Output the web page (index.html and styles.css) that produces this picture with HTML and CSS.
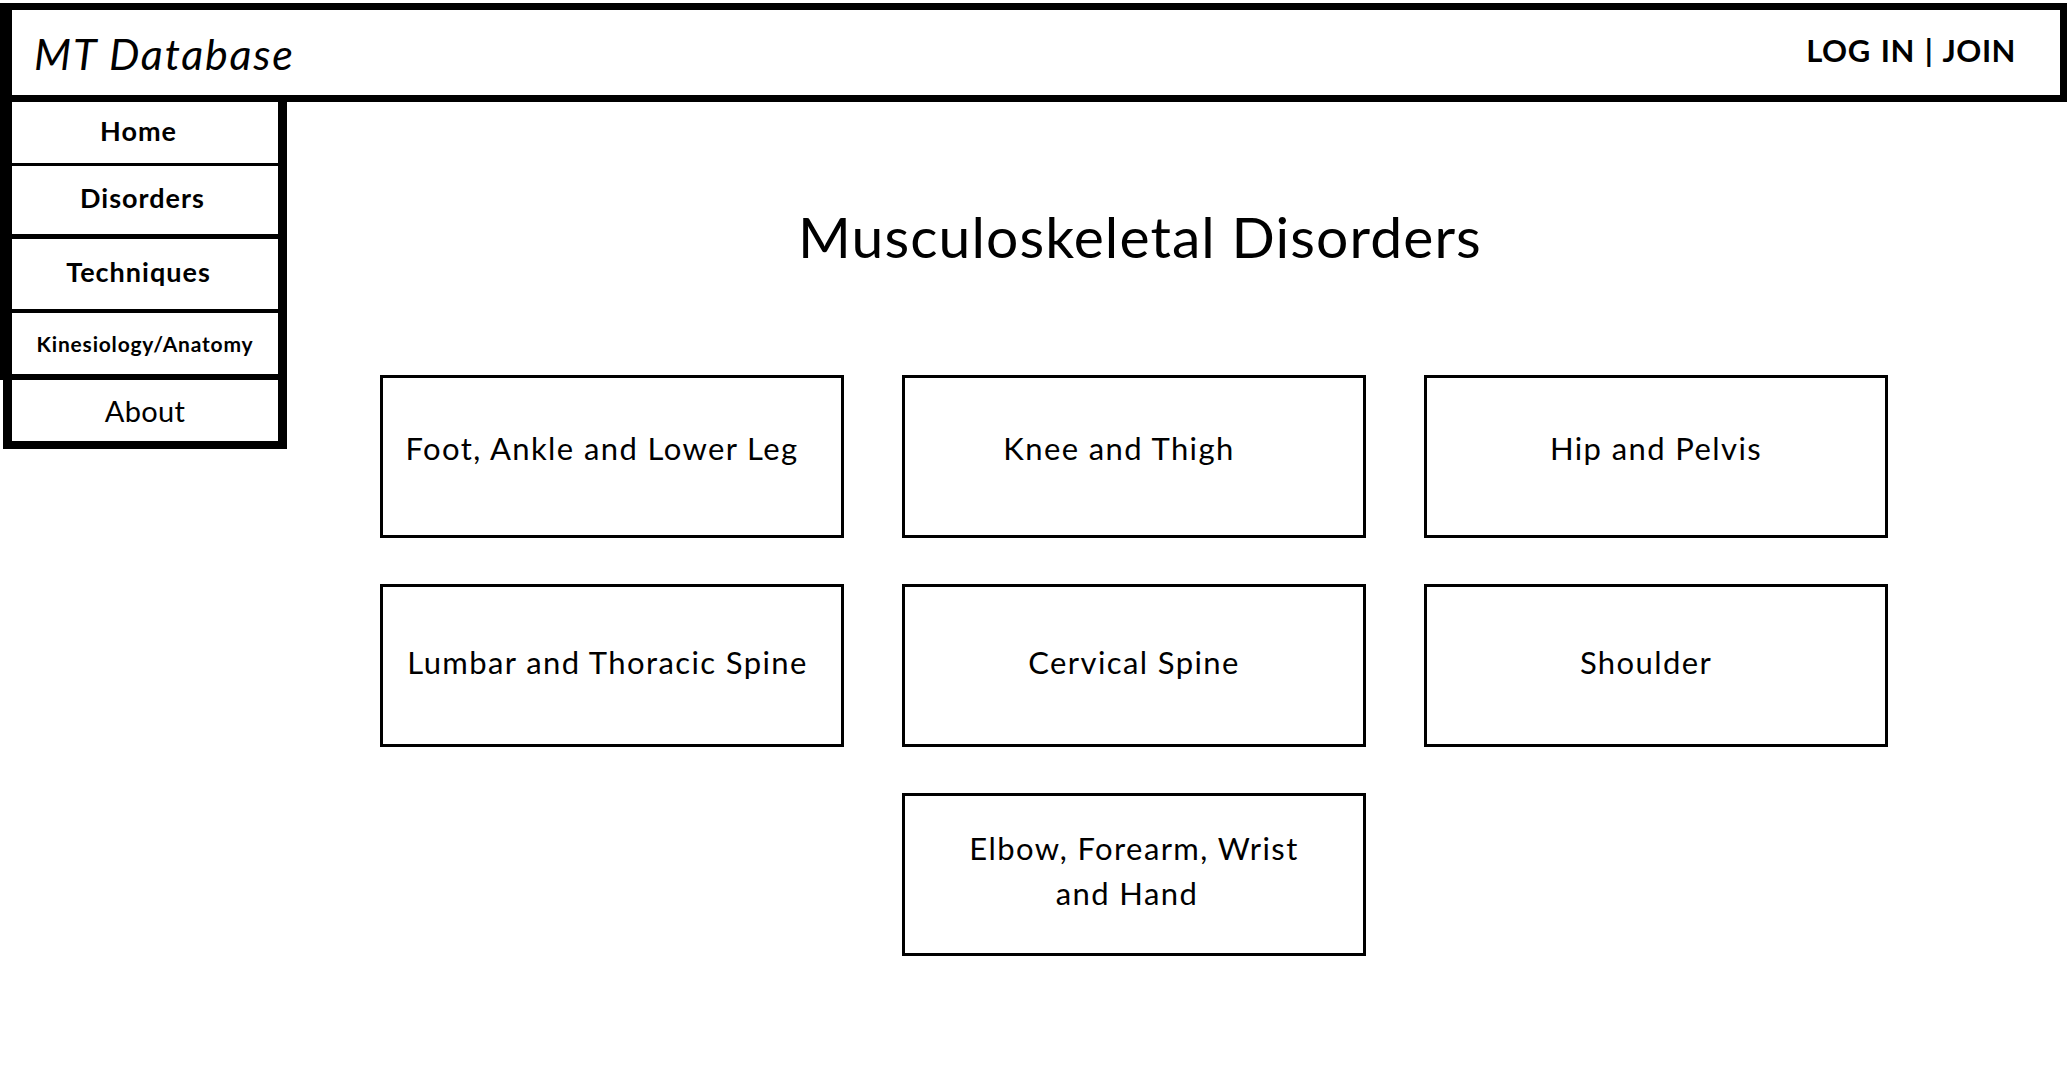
FILE: index.html
```html
<!DOCTYPE html>
<html lang="en">
<head>
<meta charset="utf-8">
<title>MT Database</title>
<link rel="stylesheet" href="styles.css">
</head>
<body>
  <header class="site-header">
    <div class="brand">MT Database</div>
    <div class="auth">LOG IN | JOIN</div>
  </header>
  <div class="layout">
    <nav class="sidenav">
      <div class="nav-group">
        <a class="nav-item nav-home" href="#">Home</a>
        <a class="nav-item nav-disorders" href="#">Disorders</a>
        <a class="nav-item nav-techniques" href="#">Techniques</a>
        <a class="nav-item nav-kines" href="#">Kinesiology/Anatomy</a>
      </div>
      <a class="nav-about" href="#">About</a>
    </nav>
    <main class="main">
      <h1 class="page-title">Musculoskeletal Disorders</h1>
      <div class="grid">
        <a class="card card-top shift-sm" href="#">Foot, Ankle and Lower Leg</a>
        <a class="card card-top shift-md" href="#">Knee and Thigh</a>
        <a class="card card-top" href="#">Hip and Pelvis</a>
        <a class="card shift-xs" href="#">Lumbar and Thoracic Spine</a>
        <a class="card" href="#">Cervical Spine</a>
        <a class="card shift-sm" href="#">Shoulder</a>
        <a class="card card-center" href="#"><span>Elbow, Forearm, Wrist<br><span class="line-two">and Hand</span></span></a>
      </div>
    </main>
  </div>
</body>
</html>
```
FILE: styles.css
```css
html, body {
  margin: 0;
  padding: 0;
  background: #fff;
}
body {
  font-family: "Lato", "Liberation Sans", sans-serif;
  color: #000;
}
a {
  color: #000;
  text-decoration: none;
}

/* Header */
.site-header {
  margin: 3px 5px 0 0;
  height: 85px;
  border-style: solid;
  border-color: #000;
  border-width: 7px 7px 7px 12px;
  display: flex;
  align-items: center;
  justify-content: space-between;
  padding: 0 44px 0 22px;
}
.brand {
  font-style: italic;
  font-size: 43px;
  letter-spacing: 1.8px;
  line-height: 1;
  padding-top: 2px;
}
.auth {
  font-weight: 700;
  font-size: 31px;
  letter-spacing: 0.5px;
  word-spacing: 2px;
  line-height: 1;
  padding-bottom: 5px;
}

/* Layout */
.layout {
  display: flex;
  align-items: flex-start;
}

/* Side navigation */
.sidenav {
  width: 287px;
  flex-shrink: 0;
  display: flex;
  flex-direction: column;
}
.nav-group {
  border-left: 12px solid #000;
  border-right: 9px solid #000;
  display: flex;
  flex-direction: column;
}
.nav-item {
  box-sizing: border-box;
  display: flex;
  align-items: center;
  justify-content: center;
  font-weight: 700;
  font-size: 27px;
  letter-spacing: 1px;
  padding-bottom: 5px;
  border-bottom: 3px solid #000;
}
.nav-home { height: 64px; border-bottom-width: 3px; padding-right: 13px; }
.nav-disorders { height: 73px; border-bottom-width: 5px; padding-right: 5px; }
.nav-techniques { height: 74px; border-bottom-width: 4px; padding-right: 13px; }
.nav-kines {
  height: 67px;
  border-bottom-width: 6px;
  padding-bottom: 0;
  font-size: 21px;
  letter-spacing: 0.8px;
}
.nav-about {
  margin-left: 3px;
  height: 61px;
  border-left: 9px solid #000;
  border-right: 9px solid #000;
  border-bottom: 8px solid #000;
  display: flex;
  align-items: center;
  justify-content: center;
  font-size: 29px;
  letter-spacing: 0.3px;
}

/* Main content */
.main {
  flex: 1;
  padding-left: 93px;
}
.page-title {
  width: 1496px;
  margin: 101px 0 0;
  padding-left: 12px;
  text-align: center;
  font-weight: 400;
  font-size: 57px;
  letter-spacing: 1.1px;
  line-height: 67px;
}
.grid {
  margin-top: 105px;
  display: grid;
  grid-template-columns: repeat(3, 464px);
  grid-auto-rows: 163px;
  column-gap: 58px;
  row-gap: 46px;
}
.card {
  box-sizing: border-box;
  border: 3px solid #000;
  display: flex;
  align-items: center;
  justify-content: center;
  text-align: center;
  font-size: 31px;
  letter-spacing: 1.4px;
  line-height: 45px;
  padding-bottom: 7px;
}
.card-top { padding-bottom: 16px; }
.shift-xs { padding-right: 9px; }
.shift-sm { padding-right: 20px; }
.shift-md { padding-right: 30px; }
.card-center { grid-column: 2; }
.line-two { padding-right: 14px; }
```
